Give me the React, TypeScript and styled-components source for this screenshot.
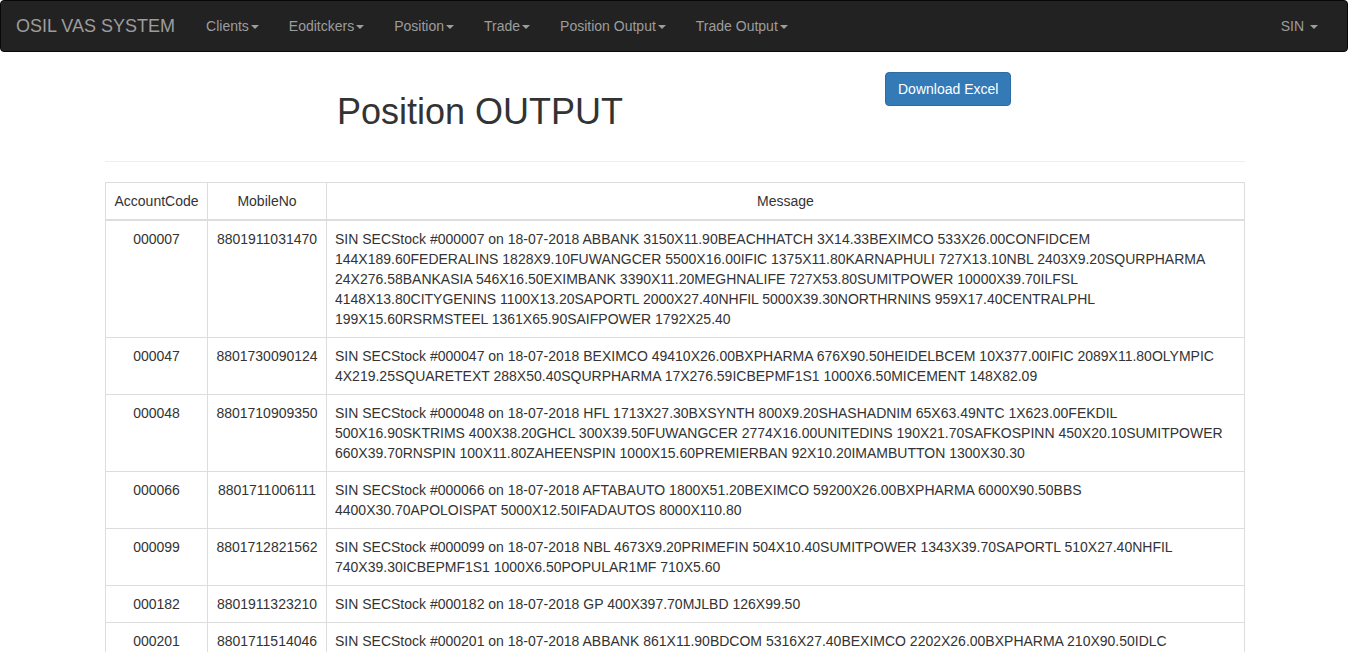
import React from "react";
import styled, { createGlobalStyle } from "styled-components";

const GlobalStyle = createGlobalStyle`
  * { box-sizing: border-box; }
  html, body { margin: 0; padding: 0; background: #fff; }
  body {
    font-family: "Liberation Sans", Arial, Helvetica, sans-serif;
    font-size: 14px;
    line-height: 1.42857143;
    color: #333;
  }
`;

const Navbar = styled.nav`
  display: flex;
  align-items: stretch;
  justify-content: space-between;
  min-height: 52px;
  background: #222;
  border: 1px solid #080808;
  border-radius: 4px;
  margin-bottom: 20px;
  padding-right: 14px;
`;

const NavGroup = styled.ul`
  display: flex;
  list-style: none;
  margin: 0;
  padding: 0;
`;

const Brand = styled.a`
  display: block;
  height: 50px;
  padding: 15px 16px 15px 15px;
  font-size: 18px;
  line-height: 20px;
  color: #9d9d9d;
  text-decoration: none;
`;

const NavLink = styled.a`
  display: block;
  padding: 15px;
  line-height: 20px;
  color: #9d9d9d;
  text-decoration: none;
  cursor: pointer;
`;

const Caret = styled.span`
  display: inline-block;
  width: 0;
  height: 0;
  margin-left: 2px;
  vertical-align: middle;
  border-top: 4px dashed;
  border-right: 4px solid transparent;
  border-left: 4px solid transparent;
`;

const Container = styled.div`
  width: 1170px;
  margin: 0 auto;
  padding: 0 14px 0 16px;
`;

const HeaderRow = styled.div`
  display: grid;
  grid-template-columns: 8fr 4fr;
  margin: 0 -15px;
`;

const Col = styled.div<{ $center?: boolean }>`
  padding: 0 15px;
  text-align: ${(p) => (p.$center ? "center" : "left")};
`;

const Title = styled.h1`
  font-size: 36px;
  font-weight: 500;
  line-height: 1.1;
  margin: 20px 0 9px;
`;

const Button = styled.button`
  display: inline-block;
  padding: 6px 12px;
  font-family: inherit;
  font-size: 14px;
  line-height: 1.42857143;
  color: #fff;
  background: #337ab7;
  border: 1px solid #2e6da4;
  border-radius: 4px;
  cursor: pointer;
`;

const Rule = styled.hr`
  margin: 20px 0;
  border: 0;
  border-top: 1px solid #eee;
`;

const Table = styled.table`
  width: 100%;
  border-collapse: collapse;
  border: 1px solid #ddd;
  margin-bottom: 20px;
`;

const ColWidth = styled.col<{ $w?: number }>`
  width: ${(p) => (p.$w ? `${p.$w}px` : "auto")};
`;

const Th = styled.th`
  padding: 8px;
  line-height: 1.42857143;
  font-weight: normal;
  text-align: center;
  vertical-align: bottom;
  border: 1px solid #ddd;
  border-bottom-width: 2px;
`;

const Td = styled.td<{ $align?: string }>`
  padding: 8px;
  line-height: 1.42857143;
  vertical-align: top;
  text-align: ${(p) => p.$align || "left"};
  border: 1px solid #ddd;
`;

const navItems = ["Clients", "Eoditckers", "Position", "Trade", "Position Output", "Trade Output"];

const rows = [
  {
    code: "000007",
    mobile: "8801911031470",
    msg: "SIN SECStock #000007 on 18-07-2018 ABBANK 3150X11.90BEACHHATCH 3X14.33BEXIMCO 533X26.00CONFIDCEM 144X189.60FEDERALINS 1828X9.10FUWANGCER 5500X16.00IFIC 1375X11.80KARNAPHULI 727X13.10NBL 2403X9.20SQURPHARMA 24X276.58BANKASIA 546X16.50EXIMBANK 3390X11.20MEGHNALIFE 727X53.80SUMITPOWER 10000X39.70ILFSL 4148X13.80CITYGENINS 1100X13.20SAPORTL 2000X27.40NHFIL 5000X39.30NORTHRNINS 959X17.40CENTRALPHL 199X15.60RSRMSTEEL 1361X65.90SAIFPOWER 1792X25.40",
  },
  {
    code: "000047",
    mobile: "8801730090124",
    msg: "SIN SECStock #000047 on 18-07-2018 BEXIMCO 49410X26.00BXPHARMA 676X90.50HEIDELBCEM 10X377.00IFIC 2089X11.80OLYMPIC 4X219.25SQUARETEXT 288X50.40SQURPHARMA 17X276.59ICBEPMF1S1 1000X6.50MICEMENT 148X82.09",
  },
  {
    code: "000048",
    mobile: "8801710909350",
    msg: "SIN SECStock #000048 on 18-07-2018 HFL 1713X27.30BXSYNTH 800X9.20SHASHADNIM 65X63.49NTC 1X623.00FEKDIL 500X16.90SKTRIMS 400X38.20GHCL 300X39.50FUWANGCER 2774X16.00UNITEDINS 190X21.70SAFKOSPINN 450X20.10SUMITPOWER 660X39.70RNSPIN 100X11.80ZAHEENSPIN 1000X15.60PREMIERBAN 92X10.20IMAMBUTTON 1300X30.30",
  },
  {
    code: "000066",
    mobile: "8801711006111",
    msg: "SIN SECStock #000066 on 18-07-2018 AFTABAUTO 1800X51.20BEXIMCO 59200X26.00BXPHARMA 6000X90.50BBS 4400X30.70APOLOISPAT 5000X12.50IFADAUTOS 8000X110.80",
  },
  {
    code: "000099",
    mobile: "8801712821562",
    msg: "SIN SECStock #000099 on 18-07-2018 NBL 4673X9.20PRIMEFIN 504X10.40SUMITPOWER 1343X39.70SAPORTL 510X27.40NHFIL 740X39.30ICBEPMF1S1 1000X6.50POPULAR1MF 710X5.60",
  },
  {
    code: "000182",
    mobile: "8801911323210",
    msg: "SIN SECStock #000182 on 18-07-2018 GP 400X397.70MJLBD 126X99.50",
  },
  {
    code: "000201",
    mobile: "8801711514046",
    msg: "SIN SECStock #000201 on 18-07-2018 ABBANK 861X11.90BDCOM 5316X27.40BEXIMCO 2202X26.00BXPHARMA 210X90.50IDLC 1500X75.20SQURPHARMA 40X276.50",
  },
];

export default function App() {
  return (
    <>
      <GlobalStyle />
      <Navbar>
        <NavGroup>
          <li>
            <Brand href="#">OSIL VAS SYSTEM</Brand>
          </li>
          {navItems.map((item) => (
            <li key={item}>
              <NavLink>
                {item}
                <Caret />
              </NavLink>
            </li>
          ))}
        </NavGroup>
        <NavGroup>
          <li>
            <NavLink>
              SIN <Caret />
            </NavLink>
          </li>
        </NavGroup>
      </Navbar>
      <Container>
        <HeaderRow>
          <Col $center>
            <Title>Position OUTPUT</Title>
          </Col>
          <Col>
            <Button>Download Excel</Button>
          </Col>
        </HeaderRow>
        <Rule />
        <Table>
          <colgroup>
            <ColWidth $w={102} />
            <ColWidth $w={119} />
            <ColWidth />
          </colgroup>
          <thead>
            <tr>
              <Th>AccountCode</Th>
              <Th>MobileNo</Th>
              <Th>Message</Th>
            </tr>
          </thead>
          <tbody>
            {rows.map((r) => (
              <tr key={r.code}>
                <Td $align="center">{r.code}</Td>
                <Td $align="center">{r.mobile}</Td>
                <Td>{r.msg}</Td>
              </tr>
            ))}
          </tbody>
        </Table>
      </Container>
    </>
  );
}
